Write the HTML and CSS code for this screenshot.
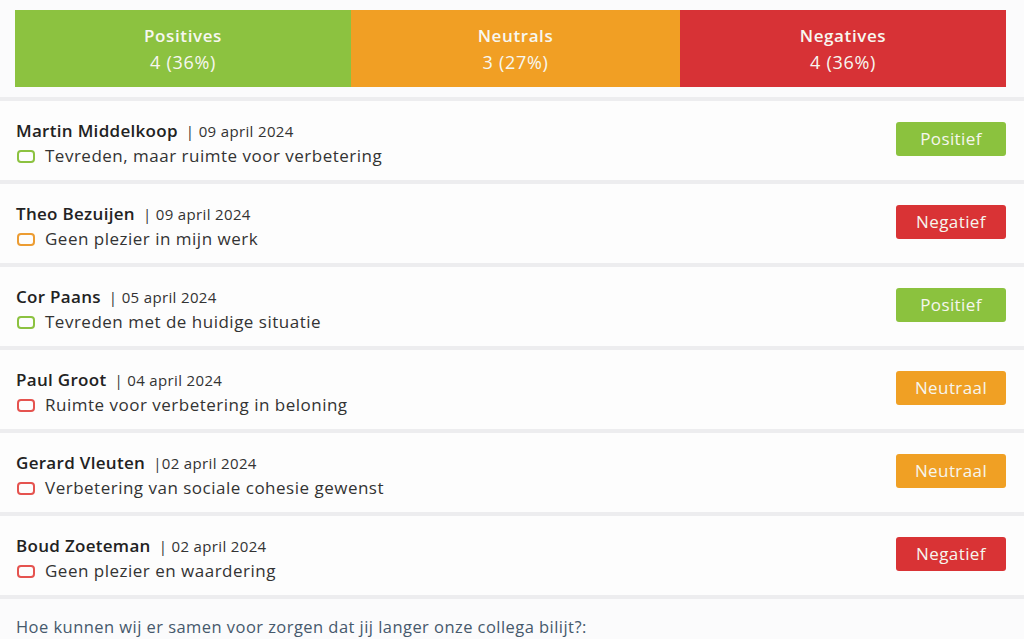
FILE: index.html
```html
<!DOCTYPE html>
<html lang="nl">
<head>
<meta charset="utf-8">
<title>Feedback overzicht</title>
<link rel="stylesheet" href="styles.css">
</head>
<body>
<div class="summary">
  <div class="seg seg-pos"><div class="seg-title">Positives</div><div class="seg-val">4 (36%)</div></div>
  <div class="seg seg-neu"><div class="seg-title">Neutrals</div><div class="seg-val">3 (27%)</div></div>
  <div class="seg seg-neg"><div class="seg-title">Negatives</div><div class="seg-val">4 (36%)</div></div>
</div>

<div class="list">
  <div class="row">
    <div class="info">
      <div class="head"><span class="name">Martin Middelkoop</span><span class="date">| 09 april 2024</span></div>
      <div class="desc"><span class="ico ico-green"></span>Tevreden, maar ruimte voor verbetering</div>
    </div>
    <span class="badge b-pos">Positief</span>
  </div>
  <div class="row">
    <div class="info">
      <div class="head"><span class="name">Theo Bezuijen</span><span class="date">| 09 april 2024</span></div>
      <div class="desc"><span class="ico ico-orange"></span>Geen plezier in mijn werk</div>
    </div>
    <span class="badge b-neg">Negatief</span>
  </div>
  <div class="row">
    <div class="info">
      <div class="head"><span class="name">Cor Paans</span><span class="date">| 05 april 2024</span></div>
      <div class="desc"><span class="ico ico-green"></span>Tevreden met de huidige situatie</div>
    </div>
    <span class="badge b-pos">Positief</span>
  </div>
  <div class="row">
    <div class="info">
      <div class="head"><span class="name">Paul Groot</span><span class="date">| 04 april 2024</span></div>
      <div class="desc"><span class="ico ico-red"></span>Ruimte voor verbetering in beloning</div>
    </div>
    <span class="badge b-neu">Neutraal</span>
  </div>
  <div class="row">
    <div class="info">
      <div class="head"><span class="name">Gerard Vleuten</span><span class="date">|02 april 2024</span></div>
      <div class="desc"><span class="ico ico-red"></span>Verbetering van sociale cohesie gewenst</div>
    </div>
    <span class="badge b-neu">Neutraal</span>
  </div>
  <div class="row">
    <div class="info">
      <div class="head"><span class="name">Boud Zoeteman</span><span class="date">| 02 april 2024</span></div>
      <div class="desc"><span class="ico ico-red"></span>Geen plezier en waardering</div>
    </div>
    <span class="badge b-neg">Negatief</span>
  </div>
</div>

<p class="question">Hoe kunnen wij er samen voor zorgen dat jij langer onze collega bilijt?:</p>
</body>
</html>
```

FILE: styles.css
```css
* { box-sizing: border-box; }

body {
  margin: 0;
  background: #fbfbfc;
  font-family: "Open Sans", "Liberation Sans", sans-serif;
  color: #2a2a2a;
  overflow: hidden;
}

.summary {
  display: flex;
  margin: 10px 18px 0 15px;
  height: 77px;
}

.seg {
  display: flex;
  flex-direction: column;
  align-items: center;
  justify-content: center;
  color: #f7f7f0;
  line-height: 26px;
  padding-top: 1px;
}

.seg-title {
  font-size: 17px;
  font-weight: 600;
  letter-spacing: 0.6px;
}

.seg-val {
  font-size: 18px;
  letter-spacing: 0.7px;
}

.seg-pos { width: 336px; background: #8cc240; }
.seg-neu { width: 329px; background: #f19f24; }
.seg-neg { flex: 1; background: #d73236; }

.list {
  margin-top: 10px;
  display: flex;
  flex-direction: column;
  gap: 4px;
  padding: 4px 0;
  background: #ededef;
}

.row {
  height: 79px;
  background: #fdfdfd;
  display: flex;
  align-items: center;
  justify-content: space-between;
  padding: 0 18px 0 16px;
}

.info {
  display: flex;
  flex-direction: column;
  gap: 2px;
  margin-top: 6px;
}

.head {
  display: flex;
  align-items: baseline;
  gap: 8px;
}

.name {
  font-size: 17px;
  font-weight: 600;
  letter-spacing: 0.3px;
  color: #222;
}

.date {
  font-size: 15px;
  letter-spacing: 0.35px;
  color: #333;
}

.desc {
  display: flex;
  align-items: center;
  font-size: 17px;
  letter-spacing: 0.5px;
  color: #333;
  line-height: 24px;
}

.ico {
  width: 18px;
  height: 13px;
  border: 2px solid;
  border-radius: 4px;
  margin: 0 10px 0 1px;
}

.ico-green { border-color: #8cc240; }
.ico-orange { border-color: #ec9c32; }
.ico-red { border-color: #e5534f; }

.badge {
  width: 110px;
  height: 34px;
  border-radius: 3px;
  display: flex;
  align-items: center;
  justify-content: center;
  color: #f6f6ee;
  font-size: 17px;
  font-weight: 500;
  letter-spacing: 0.4px;
  margin-top: -4px;
}

.b-pos { background: #8bc23e; }
.b-neg { background: #d93335; }
.b-neu { background: #f0a024; }

.question {
  margin: 16px 0 0 16px;
  font-size: 16.5px;
  letter-spacing: 0.45px;
  color: #46596c;
}
```
